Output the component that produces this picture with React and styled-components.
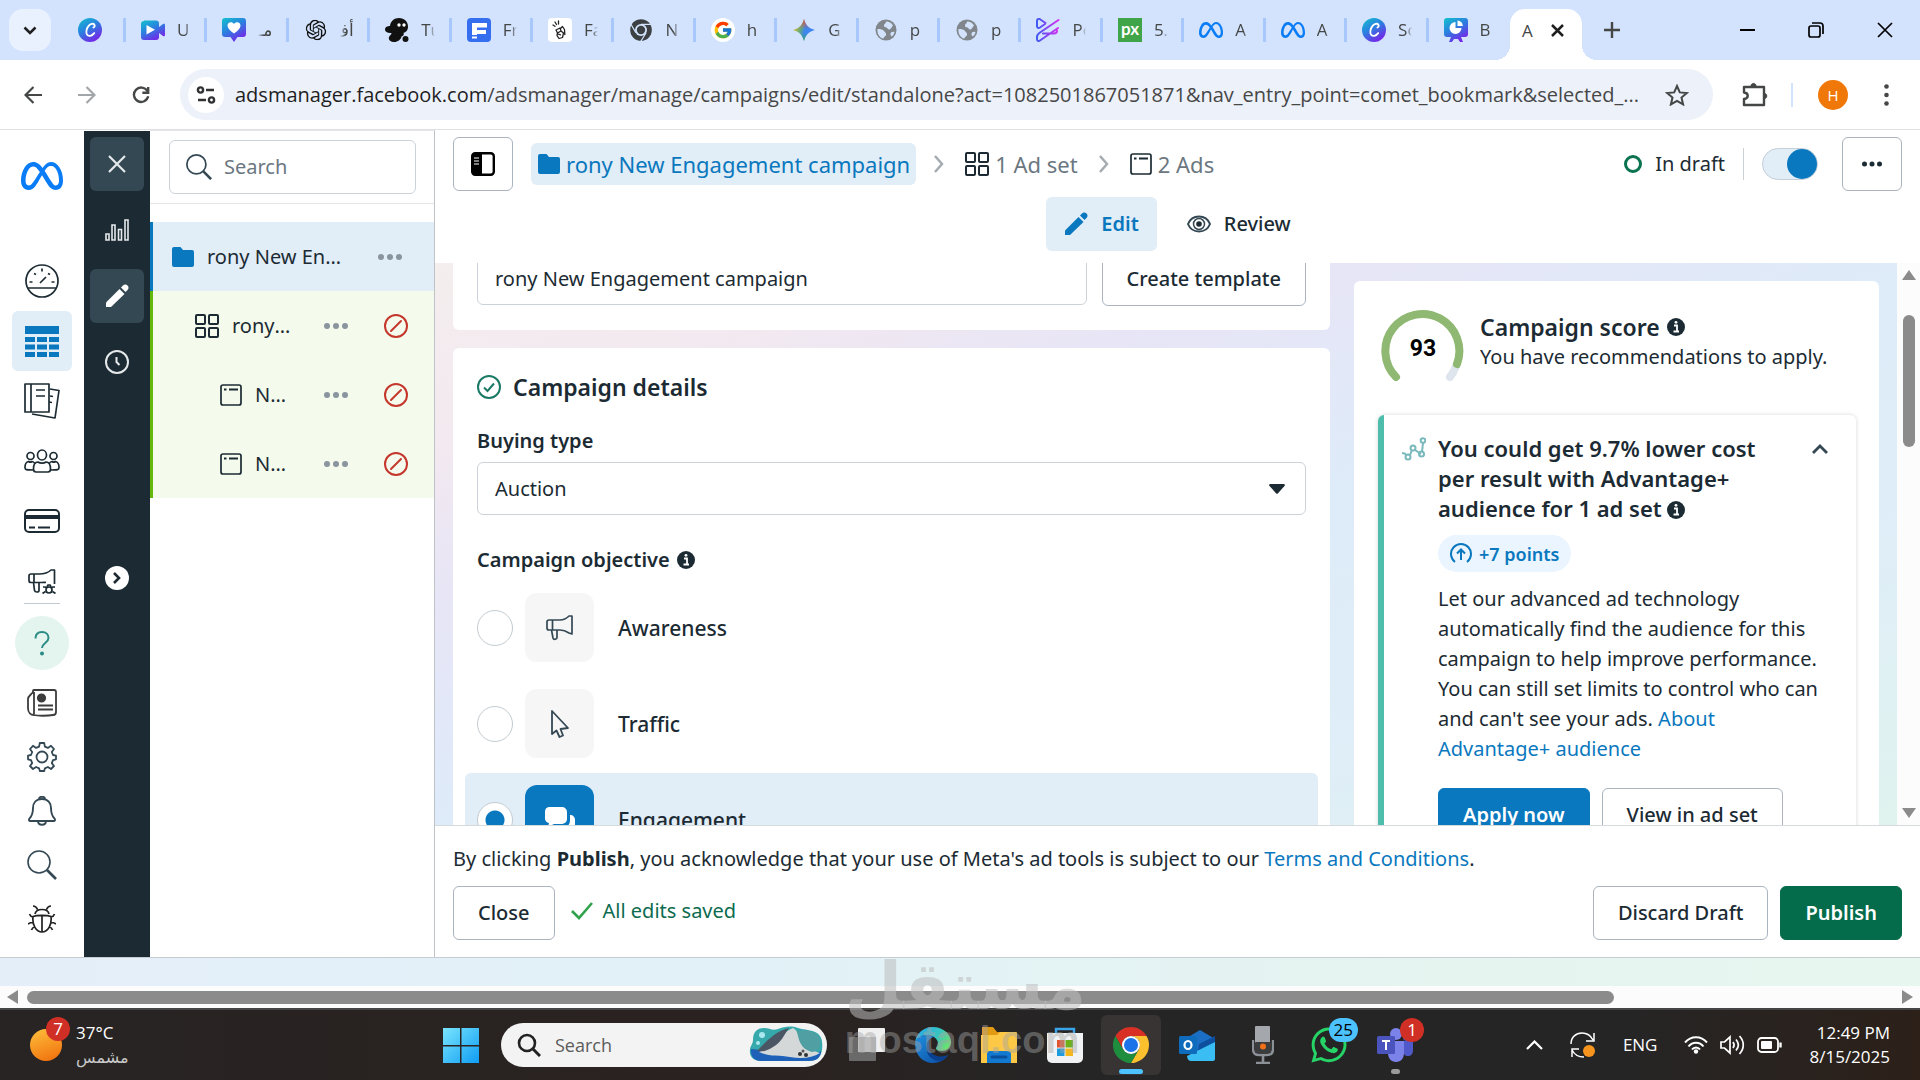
import React from 'react';
import styled, { createGlobalStyle } from 'styled-components';
import { SiMeta, SiOpenai } from 'react-icons/si';
import { FcGoogle } from 'react-icons/fc';
import { FaWhatsapp } from 'react-icons/fa';

const UI_FONT = '"Noto Sans", "Open Sans", "DejaVu Sans", sans-serif';
const SYSTEM_FONT = '"Open Sans", "Noto Sans", "DejaVu Sans", sans-serif';

/* ---------- favicons ---------- */

const CanvaFade = ({ id }) => (
  <defs>
    <linearGradient id={id} x1="0" y1="0" x2="0.6" y2="1">
      <stop offset="0" stopColor="#12c2cc" />
      <stop offset="0.5" stopColor="#2a80e0" />
      <stop offset="1" stopColor="#7428e8" />
    </linearGradient>
  </defs>
);

const CanvaIcon = ({ id }) => (
  <svg viewBox="0 0 24 24">
    <CanvaFade id={id} />
    <circle cx="12" cy="12" r="12" fill={`url(#${id})`} />
    <path
      d="M15.4 9.6c1-.6 1.600-1.800 1-2.900-1-1.700-4-1-5.800 1.200-2.200 2.600-2.900 6.500-1.600 8.700 1.400 2.200 5 1.500 7.200-1.500"
      fill="none"
      stroke="#fff"
      strokeWidth="1.800"
      strokeLinecap="round"
    />
  </svg>
);

const VideoIcon = () => (
  <svg viewBox="0 0 24 24">
    <CanvaFade id="video" />
    <path d="M3 2.500h12a3 3 0 0 1 3 3V9l4-3c1-.7 2 0 2 1v10c0 1-1 1.700-2 1l-4-3v4a3 3 0 0 1-3 3H3a3 3 0 0 1-3-3v-13a3 3 0 0 1 3-3z" fill="url(#video)" />
    <path d="M5.500 7v9.500l8.500-4.700z" fill="#fff" />
  </svg>
);

const HeartIcon = () => (
  <svg viewBox="0 0 24 24">
    <CanvaFade id="heart" />
    <path d="M3 0h18a3 3 0 0 1 3 3v13a3 3 0 0 1-3 3h-5.500L12 24l-3.500-5H3a3 3 0 0 1-3-3V3a3 3 0 0 1 3-3z" fill="url(#heart)" />
    <path d="M12 15.500C8 12.500 5.500 10.500 5.500 7.500c0-3.600 4.800-4.600 6.500-1.400 1.700-3.200 6.500-2.200 6.500 1.400 0 3-2.500 5-6.500 8z" fill="#fff" />
  </svg>
);

const OpenAiIcon = () => (
  <svg viewBox="-2 -2 28 28">
    <SiOpenai size="24" color="#111" />
  </svg>
);

const BlobIcon = () => (
  <svg viewBox="0 0 24 24">
    <path d="M14 0c5.500 0 9 4 9 8.500 0 4-2 5.500-4.500 6.500 1 2-.5 3-2 3.500-.5 3-4 5.500-7 5.500-3.500 0-6.500-2-5.500-5 .6-1.800 2.500-2 2.500-4C3 15.500 0 14 0 11.500 0 9 2.500 8 5 8 5.500 3.500 9 0 14 0z" fill="#111" />
    <circle cx="14" cy="7" r="1.700" fill="#fff" />
    <circle cx="19" cy="7" r="1.700" fill="#fff" />
    <circle cx="20.500" cy="21" r="3" fill="#111" />
  </svg>
);

const FIcon = () => (
  <svg viewBox="0 0 24 24">
    <rect width="24" height="24" rx="4" fill="#366ef0" />
    <path d="M5 5h15v4.500H10V12h9v4h-9v1H5zM5 18.500h5v2H5z" fill="#fff" />
  </svg>
);

const HandIcon = () => (
  <svg viewBox="0 0 24 24">
    <rect width="24" height="24" rx="4" fill="#fff" />
    <path
      d="M8 12l4-2 1 3-3.500 2zM9.500 15l3.500-2 2.500 2-1 4.500-3.500 1-2-3zM13 10l1.500-1.500 2 3 .3 5M7 4l1.500 2.500M10.500 3v3M5 7l2 1.300M10 16l2.500.8"
      fill="none"
      stroke="#222"
      strokeWidth="1.300"
      strokeLinecap="round"
      strokeLinejoin="round"
    />
  </svg>
);

const GreyChromeIcon = () => (
  <svg viewBox="4 4 40 40">
    <circle cx="24" cy="24" r="18" fill="#3c4043" />
    <path d="M24 14.500h18M15.500 28.500L7 14M32.500 28.500L23 44" stroke="#d3e3fd" strokeWidth="2" />
    <circle cx="24" cy="24" r="10" fill="#d3e3fd" />
    <circle cx="24" cy="24" r="7" fill="#3c4043" />
  </svg>
);

const GoogleIcon = () => (
  <svg viewBox="0 0 24 24">
    <circle cx="12" cy="12" r="12" fill="#fff" />
    <FcGoogle x="2" y="2" size="20" />
  </svg>
);

const GeminiIcon = () => (
  <svg viewBox="0 0 24 24">
    <defs>
      <linearGradient id="gemini" x1="0" y1="0.300" x2="1" y2="0.600">
        <stop offset="0" stopColor="#f7c324" />
        <stop offset="0.350" stopColor="#68a878" />
        <stop offset="0.550" stopColor="#3c86ee" />
        <stop offset="1" stopColor="#4285f4" />
      </linearGradient>
      <linearGradient id="geminiTop" x1="0" y1="0" x2="0" y2="1">
        <stop offset="0" stopColor="#ea4b40" />
        <stop offset="0.450" stopColor="#ea4b40" stopOpacity="0" />
        <stop offset="0.650" stopColor="#34a853" stopOpacity="0" />
        <stop offset="1" stopColor="#34a853" />
      </linearGradient>
    </defs>
    <path d="M12 1c1.500 6 5 9.500 11 11-6 1.500-9.500 5-11 11-1.500-6-5-9.500-11-11 6-1.500 9.500-5 11-11z" fill="url(#gemini)" />
    <path d="M12 1c1.500 6 5 9.500 11 11-6 1.500-9.500 5-11 11-1.500-6-5-9.500-11-11 6-1.500 9.500-5 11-11z" fill="url(#geminiTop)" />
  </svg>
);

const GlobeIcon = () => (
  <svg viewBox="0 0 24 24">
    <circle cx="12" cy="12" r="10.500" fill="#80868b" />
    <path d="M3.500 11c3 0 5.500.5 6.500 2s2.500 2 2 4-2.500 1.500-2.500 3.700C5.500 19.500 3 16 3.500 11zM12 3.500c3 0 5.500 1.500 7 4-1.500 1-1.500 3.500-3.500 4s-1.500-1.500-3-2-2.500 0-2.500-2S12 6 12 3.500zM17 14.500c1-.8 2.500-.8 3.500-.5-.5 2-1.500 3.500-3 4.500-1-1-1.500-3-.5-4z" fill="#d3e3fd" />
  </svg>
);

const PowerIcon = () => (
  <svg viewBox="0 0 24 24">
    <defs>
      <linearGradient id="power" x1="0" y1="0" x2="24" y2="0" gradientUnits="userSpaceOnUse">
        <stop offset="0" stopColor="#3b5bf5" />
        <stop offset="1" stopColor="#e02df0" />
      </linearGradient>
    </defs>
    <path d="M9.500 5L4 1.200C2.500.3 1 1 1 3v5c0 2 1.500 2.500 3 1.500L9 6M22.500 2L4 14.500c-1.500 1-3 2.500-3 4.500v2c0 2 1.500 2.500 3 1.500l18-12.500M7 15.500h11c2 0 3-1 3-3" fill="none" stroke="url(#power)" strokeWidth="2" strokeLinecap="round" strokeLinejoin="round" />
  </svg>
);

const PxIcon = () => (
  <svg viewBox="0 0 24 24">
    <rect width="24" height="24" fill="#3fa548" />
    <text x="12" y="16.500" textAnchor="middle" fontFamily="Lato, sans-serif" fontWeight="700" fontSize="17" fill="#fff">px</text>
  </svg>
);

const MetaIcon = () => <SiMeta color="#0a7cf5" />;

const ChartBoardIcon = () => (
  <svg viewBox="0 0 24 24">
    <CanvaFade id="board" />
    <path d="M3 0h18a3 3 0 0 1 3 3v13a3 3 0 0 1-3 3h-4l2 5h-3l-2-3h-4l-2 3H5l2-5H3a3 3 0 0 1-3-3V3a3 3 0 0 1 3-3z" fill="url(#board)" />
    <path d="M11.500 4a6 6 0 1 0 6 6h-6z" fill="#fff" />
    <path d="M13.500 2.500a5.500 5.500 0 0 1 5.300 5.500h-5.300z" fill="#fff" />
  </svg>
);

/* ---------- page icons ---------- */

const FolderIcon = () => (
  <svg width="22" height="20" viewBox="0 0 22 20">
    <path d="M2 0h6.500L11 3h9a2 2 0 0 1 2 2v13a2 2 0 0 1-2 2H2a2 2 0 0 1-2-2V2a2 2 0 0 1 2-2z" fill="#0a78be" />
  </svg>
);

const GridIcon = () => (
  <svg width="24" height="24" viewBox="0 0 24 24" fill="none" stroke="#1c2b33" strokeWidth="2">
    <rect x="1" y="1" width="9" height="9" rx="1" />
    <rect x="14" y="1" width="9" height="9" rx="1" />
    <rect x="1" y="14" width="9" height="9" rx="1" />
    <rect x="14" y="14" width="9" height="9" rx="1" />
  </svg>
);

const AdIcon = () => (
  <svg width="22" height="22" viewBox="0 0 22 22" fill="none" stroke="#1c2b33" strokeWidth="1.700">
    <rect x="1" y="1" width="20" height="20" rx="2" />
    <path d="M9 5.500h9M4 5.500h2.500" strokeWidth="2" />
  </svg>
);

const DotsIcon = ({ color = '#8a949e', size = 24 }) => (
  <svg width={size} height="8" viewBox="0 0 24 8" fill={color}>
    <circle cx="3" cy="4" r="3" />
    <circle cx="12" cy="4" r="3" />
    <circle cx="21" cy="4" r="3" />
  </svg>
);

const BanIcon = () => (
  <svg width="24" height="24" viewBox="0 0 24 24" fill="none" stroke="#c5372c" strokeWidth="2">
    <circle cx="12" cy="12" r="11" />
    <path d="M7 17L17 7" strokeLinecap="round" />
  </svg>
);

const PencilIcon = ({ color }) => (
  <svg width="24" height="24" viewBox="0 0 24 24" fill={color}>
    <path d="M1 18.500L14.500 5l5 5L6 23H1z" />
    <path d="M16 3.500l2-2a3 3 0 0 1 4.500 0 3 3 0 0 1 0 4.500l-2 2z" />
  </svg>
);

const InfoIcon = () => (
  <svg width="18" height="18" viewBox="0 0 18 18">
    <circle cx="9" cy="9" r="9" fill="#1c2b33" />
    <path d="M7 7.500h3V13M6.500 13.500h5.500" fill="none" stroke="#fff" strokeWidth="1.800" />
    <circle cx="9" cy="4.300" r="1.400" fill="#fff" />
  </svg>
);

const SearchGlass = ({ size = 26, color = '#344854', stroke = 2 }) => (
  <svg width={size} height={size} viewBox="0 0 30 30" fill="none" stroke={color} strokeWidth={stroke}>
    <circle cx="12" cy="12" r="11" />
    <path d="M20 20l9 9" strokeWidth={stroke + 1} />
  </svg>
);

const ChevronRight = () => (
  <svg width="10" height="18" viewBox="0 0 10 18" fill="none" stroke="#a4abb1" strokeWidth="2.500">
    <path d="M1 1l7 8-7 8" />
  </svg>
);

const Megaphone = () => (
  <svg width="28" height="26" viewBox="0 0 28 26" fill="none" stroke="#344854" strokeWidth="1.700" strokeLinejoin="round">
    <path d="M1 7c0-1.500 1-2 2-2h11c4 0 7-2 9-4h3v18l-3-1c-3-2-5-3-9-3H3c-1 0-2-.5-2-2zM6.500 5v10M5.500 15l1.500 8c.5 2 4 1.500 4-.5V15" />
  </svg>
);

const MegaphoneBug = () => (
  <svg width="28" height="25" viewBox="0 0 28 25" fill="none" stroke="#1c2b33" strokeWidth="1.700" strokeLinejoin="round">
    <path d="M18 13.500c-1-.2-2 0-4 0H3c-1 0-2-1-2-2V7c0-1 1-2 2-2h8c6 0 10-2 12-4h3.500v14M6 5v8M5.500 13.500l1 8c.5 2 4.500 2 4.500 0v-8" />
    <circle cx="21" cy="21" r="3" />
    <path d="M15 18h2l2 1M27 18h-2l-2 1M14.500 24.500l3-2M27.500 24.500l-3-2M19 18l1-2h2l1 2" />
  </svg>
);

const railTop = [
  {
    label: 'Account overview',
    icon: (
      <svg width="34" height="34" viewBox="0 0 34 34" fill="none" stroke="#1c2b33" strokeWidth="1.700">
        <circle cx="17" cy="17" r="16" />
        <path d="M3 24h28M15 19l6-6M4.500 18h3M26.500 18h3M9 9.500l2 1M23 9.500l2 1M17 4.500v3" />
      </svg>
    ),
  },
  {
    label: 'Campaigns',
    active: true,
    icon: (
      <svg width="34" height="31" viewBox="0 0 34 31" fill="#0a78be">
        <path d="M0 0h34v8H0zM0 11h10v5H0zM12 11h10v5H12zM24 11h10v5H24zM0 18.500h10v5H0zM12 18.500h10v5H12zM24 18.500h10v5H24zM0 26h10v5H0zM12 26h10v5H12zM24 26h10v5H24z" />
      </svg>
    ),
  },
  {
    label: 'Ads reporting',
    icon: (
      <svg width="36" height="36" viewBox="0 0 36 36" fill="none" stroke="#1c2b33" strokeWidth="1.700" strokeLinejoin="round">
        <path d="M1 1h24v28H1zM7 1v28M12 7h9M12 13h9M26 6l9 1.500L31 35 8 31M26 13l3 .5M25 19l3 .5" />
      </svg>
    ),
  },
  {
    label: 'Audiences',
    icon: (
      <svg width="36" height="24" viewBox="0 0 36 24" fill="none" stroke="#1c2b33" strokeWidth="1.700">
        <ellipse cx="18" cy="6" rx="4.500" ry="5" />
        <circle cx="6.500" cy="7" r="3.500" />
        <circle cx="29.500" cy="7" r="3.500" />
        <path d="M9.500 20c0-5 2-7 4.500-7 2 1.500 6 1.500 8 0 2.500 0 4.500 2 4.500 7 0 2-1 3-2.500 3H12c-1.500 0-2.500-1-2.500-3zM10.500 14c-1-1-2-1.500-2.500-1.500-1 .8-2.500.8-3.500 0C2 13 1 16 1 18.500 1 21 2 21 9.500 21M25.500 14c1-1 2-1.500 2.500-1.500 1 .8 2.500.8 3.500 0C34 13 35 16 35 18.500c0 2.500-1 2.500-8.500 2.500" />
      </svg>
    ),
  },
  {
    label: 'Billing',
    icon: (
      <svg width="36" height="24" viewBox="0 0 36 24" fill="none" stroke="#1c2b33" strokeWidth="2">
        <rect x="1" y="1" width="34" height="22" rx="4" />
        <path d="M1 8h34" strokeWidth="4" />
        <path d="M5 18.500h6M14 18.500h12" />
      </svg>
    ),
  },
  { label: 'Advertising settings', icon: <MegaphoneBug /> },
];

const railBottom = [
  {
    label: 'News',
    icon: (
      <svg width="30" height="28" viewBox="0 0 30 28" fill="none" stroke="#3c3c3c" strokeWidth="1.800">
        <path d="M7 1h20c1.500 0 2 1 2 2v20c0 2-1 3-3 3-5 1-16 1-19 0-3 0-6-2-6-7V10c0-3 3-4 5-7 0-1.500 0-2 1-2zM7 3v22M11 16.500h15M11 20.500h15" />
        <circle cx="14.500" cy="9" r="3.700" fill="#3c3c3c" />
      </svg>
    ),
  },
  {
    label: 'Settings',
    icon: (
      <svg width="30" height="30" viewBox="0 0 30 30" fill="none" stroke="#344854" strokeWidth="1.800" strokeLinejoin="round">
        <circle cx="15" cy="15" r="5.500" />
        <path d="M12.800 1h4.400l.7 3.600 3 1.300L24 3.800 27 7l-2.200 3 1.200 3 3 .7v3.600l-3 .8-1.200 3L27 24l-3 3-3.100-2-3 1.300-.7 2.700h-4.400l-.7-2.700-3-1.300L6 27l-3-3 2.200-2.900-1.200-3-3-.8v-3.600l3-.7 1.200-3L3 7l3-3.200 3.100 2.100 3-1.300z" />
      </svg>
    ),
  },
  {
    label: 'Notifications',
    icon: (
      <svg width="28" height="30" viewBox="0 0 28 30" fill="none" stroke="#344854" strokeWidth="1.900">
        <path d="M14 3c-6 0-9 4-9 9 0 6-1 8-3.500 10.500-1 1.500-.5 2.500 1 2.500h23c1.500 0 2-1 1-2.500C24 20 23 18 23 12c0-5-3-9-9-9zM11 3c0-3 6-3 6 0M10 25c0 5 8 5 8 0" />
      </svg>
    ),
  },
  { label: 'Search', icon: <SearchGlass size={30} stroke={1.600} /> },
  {
    label: 'Report a problem',
    icon: (
      <svg width="28" height="28" viewBox="0 0 28 28" fill="none" stroke="#222" strokeWidth="1.700">
        <path d="M7 9c1-6 13-6 14 0M5 11.500C4 20 8 27 14 27s10-7 9-15.500C19 10 9 10 5 11.500zM14 11v16M9.500 4.500C8.500 2 7 1 5 1M18.500 4.500c1-2.500 2.500-3.500 4.500-3.500M5 12c-2-.3-3-1.500-3.500-3M5 17.500c-2 0-3.500.5-5 1.500M6.500 22c-2 .5-2.500 1.500-3 3M23 12c2-.3 3-1.500 3.500-3M23 17.500c2 0 3.500.5 5 1.500M21.500 22c2 .5 2.500 1.500 3 3" />
      </svg>
    ),
  },
];

const tabs = [
  { title: 'U', icon: <VideoIcon /> },
  { title: 'مـ', icon: <HeartIcon />, rtl: true },
  { title: 'أف', icon: <OpenAiIcon />, rtl: true },
  { title: 'Tu', icon: <BlobIcon /> },
  { title: 'Fr', icon: <FIcon /> },
  { title: 'Fa', icon: <HandIcon /> },
  { title: 'N', icon: <GreyChromeIcon /> },
  { title: 'h', icon: <GoogleIcon /> },
  { title: 'G', icon: <GeminiIcon /> },
  { title: 'p', icon: <GlobeIcon /> },
  { title: 'p', icon: <GlobeIcon /> },
  { title: 'Po', icon: <PowerIcon /> },
  { title: '5.', icon: <PxIcon /> },
  { title: 'A', icon: <MetaIcon /> },
  { title: 'A', icon: <MetaIcon /> },
  { title: 'Sc', icon: <CanvaIcon id="canva2" /> },
  { title: 'B', icon: <ChartBoardIcon />, last: true },
];

/* ---------- taskbar icons ---------- */

const ChromeLogo = () => (
  <svg width="36" height="36" viewBox="4 4 40 40">
    <path d="M6.680 14A20 20 0 0 1 41.320 14H24a10 10 0 0 0-8.660 15z" fill="#d93025" />
    <path d="M41.320 14A20 20 0 0 1 24 44l8.660-15A10 10 0 0 0 24 14z" fill="#fbc02d" />
    <path d="M24 44A20 20 0 0 1 6.680 14l8.660 15a10 10 0 0 0 17.320 0z" fill="#1e8e3e" />
    <circle cx="24" cy="24" r="10" fill="#fff" />
    <circle cx="24" cy="24" r="7.800" fill="#1a73e8" />
  </svg>
);

const TaskViewIcon = () => (
  <svg width="36" height="36" viewBox="0 0 36 36">
    <rect x="0" y="10" width="27" height="24" rx="1" fill="#6a6a6a" />
    <rect x="9" y="1" width="27" height="24" rx="1" fill="#f0f0f0" />
    <path d="M9 10h18v15H9z" fill="#bdbdbd" />
  </svg>
);

const EdgeLogo = () => (
  <svg width="36" height="36" viewBox="0 0 36 36">
    <defs>
      <linearGradient id="edgeTop" x1="0" y1="0.200" x2="1" y2="0.600">
        <stop offset="0" stopColor="#2aa7ea" />
        <stop offset="0.600" stopColor="#36c6c0" />
        <stop offset="1" stopColor="#6be36a" />
      </linearGradient>
      <linearGradient id="edgeLow" x1="0" y1="0" x2="1" y2="1">
        <stop offset="0" stopColor="#1f8fe0" />
        <stop offset="1" stopColor="#0c4aa0" />
      </linearGradient>
    </defs>
    <path d="M0 16C1 6 9 0 18 0c10 0 18 7 18 15 0 6-4 9-9 9-4 0-6-1-6-2.500s2-2 2-5C23 12 18 8 12 8 6 8 2 11 0 16z" fill="url(#edgeTop)" />
    <path d="M0 17C1 11 6 8 12 8c3 0 5 1 7 2-5 1-7 5-7 9 0 7 6 11 13 11 4 0 6-1 8-2-3 5-9 8-15 8C8 36 0 28 0 17z" fill="url(#edgeLow)" />
    <path d="M14 14c-6 7-1 20 11 20 4-1 7-4 8-6-8 4-18 0-19-7z" fill="#0a3f8f" />
  </svg>
);

const ExplorerIcon = () => (
  <svg width="36" height="36" viewBox="0 0 36 36">
    <path d="M1 0h11l4 5h19v10H1z" fill="#e29a12" />
    <path d="M0 8h16l3-3h16a1 1 0 0 1 1 1v30H0z" fill="#fcc846" />
    <path d="M6 36V27c0-2 1-3 3-3h18c2 0 3 1 3 3v9z" fill="#1279d0" />
    <path d="M11 30h14" stroke="#0a4f9a" strokeWidth="3" strokeLinecap="round" />
  </svg>
);

const StoreIcon = () => (
  <svg width="36" height="36" viewBox="0 0 36 36">
    <path d="M9 7V2h18v5" fill="none" stroke="#3aa4ea" strokeWidth="2.400" />
    <path d="M0 6h36v25a5 5 0 0 1-5 5H5a5 5 0 0 1-5-5z" fill="#f1f2f3" />
    <path d="M10 13h7.500v7.500H10z" fill="#e0542e" />
    <path d="M18.500 13H26v7.500h-7.500z" fill="#6cb01c" />
    <path d="M10 21.500h7.500V29H10z" fill="#1f9be0" />
    <path d="M18.500 21.500H26V29h-7.500z" fill="#f5b81c" />
  </svg>
);

const OutlookIcon = () => (
  <svg width="36" height="31" viewBox="0 0 36 31">
    <path d="M6 9L21 0l15 9v4L18 24 6 16z" fill="#1a6fc4" />
    <path d="M20 14L36 6v9L18 28z" fill="#0d4f9e" />
    <path d="M8 26l28-14v17a2 2 0 0 1-2 2H12c-2 0-4-2-4-5z" fill="#39bdf2" />
    <rect x="0" y="6" width="18" height="18" rx="1.500" fill="#0f6cbd" />
    <ellipse cx="9" cy="15" rx="3.500" ry="4" fill="none" stroke="#fff" strokeWidth="2.200" />
  </svg>
);

const MicIcon = () => (
  <svg width="22" height="38" viewBox="0 0 22 38">
    <rect x="3" y="0" width="15" height="18" rx="1" fill="#a4a8ad" />
    <path d="M1 14v9c0 4 2 6 6 6h8c4 0 6-2 6-6v-9" fill="none" stroke="#8b9196" strokeWidth="2.400" />
    <rect x="3" y="16" width="16" height="11" rx="1" fill="#3b3c3e" />
    <circle cx="11" cy="20.500" r="3" fill="#f07018" />
    <path d="M11 30v6M4 37h14" stroke="#8b9196" strokeWidth="2.600" />
  </svg>
);

const TeamsIcon = () => (
  <svg width="36" height="34" viewBox="0 0 36 34">
    <circle cx="19" cy="6" r="6" fill="#7b83eb" />
    <circle cx="30" cy="9" r="4" fill="#5059c9" />
    <path d="M24 13h12v9c0 4-2 6-5 6s-5-2-5-6z" fill="#5059c9" />
    <path d="M11 13h16v12c0 5-3 9-8 9s-8-4-8-9z" fill="#7b83eb" />
    <rect x="0" y="8" width="18" height="18" rx="1.500" fill="#4b53bc" />
    <path d="M5 13h8M9 13v9" stroke="#fff" strokeWidth="2" />
  </svg>
);

// stingray in a wave, the daily picture of the search box
const StingrayArt = () => (
  <svg width="74" height="38" viewBox="0 0 74 38">
    <path d="M4 14c0-8 4-12 11-12 6 0 8 3 14 1s12-4 20-1c8 2 12 2 17 4 7 3 8 10 7 18-1 7-6 11-13 11H12c-8 0-12-5-11-11 0-4 3-6 3-10z" fill="#35a9ac" />
    <path d="M2 23c6 0 10 2 16 3 14 3 28 2 40 3 6 0 10-2 14-4 0 7-5 10-12 10H12C5 35 1 30 2 23z" fill="#1d62b8" />
    <path d="M10 26C22 22 30 8 44 2c6 3 5 11 10 16 5 5 11 7 17 9-8 5-18 6-30 4-11-2-21 0-31-5z" fill="#d5d8d9" />
    <path d="M8 25C16 17 26 5 40 2c-5 7-8 15-16 19-6 4-11 5-16 4z" fill="#4a5663" />
    <path d="M48 5c9-2 20 0 23 8 2 7-1 12-8 13-8-2-13-7-15-21z" fill="#4f9fa3" />
    <circle cx="13" cy="9" r="3" fill="#a9e8ee" />
    <circle cx="9" cy="17" r="2" fill="#a9e8ee" />
    <circle cx="51" cy="28" r="2" fill="#333" />
    <circle cx="57" cy="29" r="2" fill="#333" />
    <circle cx="54" cy="25" r="1.500" fill="#555" />
  </svg>
);

function TabStrip() {
  return (
    <Strip>
      <TabSearch aria-label="Search tabs">
        <svg width="14" height="9" viewBox="0 0 14 9" fill="none" stroke="#1f1f1f" strokeWidth="2.500">
          <path d="M1.500 1.500L7 7l5.500-5.500" />
        </svg>
      </TabSearch>
      <PinnedTab aria-label="Canva">
        <Favicon><CanvaIcon id="canva1" /></Favicon>
      </PinnedTab>
      <TabList>
        {tabs.map((tab, i) => (
          <Tab key={i} $last={tab.last}>
            <Favicon>{tab.icon}</Favicon>
            <TabTitle dir={tab.rtl ? 'rtl' : 'ltr'}>{tab.title}</TabTitle>
          </Tab>
        ))}
      </TabList>
      <ActiveTab>
        A
        <svg width="13" height="13" viewBox="0 0 13 13" stroke="#1f1f1f" strokeWidth="2.500">
          <path d="M1 1l11 11M12 1L1 12" />
        </svg>
      </ActiveTab>
      <PlainButton aria-label="New tab">
        <svg width="16" height="16" viewBox="0 0 16 16" stroke="#444746" strokeWidth="2.400">
          <path d="M8 0v16M0 8h16" />
        </svg>
      </PlainButton>
      <WindowControls>
        <PlainButton aria-label="Minimize">
          <svg width="15" height="15" viewBox="0 0 15 15" stroke="#000" strokeWidth="2"><path d="M0 7h15" /></svg>
        </PlainButton>
        <PlainButton aria-label="Restore">
          <svg width="16" height="16" viewBox="0 0 16 16" fill="none" stroke="#000" strokeWidth="1.700">
            <rect x="1" y="4" width="11" height="11" rx="2" />
            <path d="M4 1h8a3 3 0 0 1 3 3v8" />
          </svg>
        </PlainButton>
        <PlainButton aria-label="Close window">
          <svg width="16" height="16" viewBox="0 0 16 16" stroke="#000" strokeWidth="1.700"><path d="M1 1l14 14M15 1L1 15" /></svg>
        </PlainButton>
      </WindowControls>
    </Strip>
  );
}

function Toolbar() {
  return (
    <BrowserBar>
      <PlainButton aria-label="Back">
        <svg width="18" height="18" viewBox="0 0 18 18" fill="none" stroke="#444746" strokeWidth="2.200"><path d="M18 9H2M9.500 1L1.500 9l8 8" /></svg>
      </PlainButton>
      <PlainButton aria-label="Forward">
        <svg width="18" height="18" viewBox="0 0 18 18" fill="none" stroke="#a3a6a8" strokeWidth="2.200"><path d="M0 9h16M8.500 1l8 8-8 8" /></svg>
      </PlainButton>
      <PlainButton aria-label="Reload">
        <svg width="18" height="18" viewBox="0 0 20 20" fill="none" stroke="#444746" strokeWidth="2.600">
          <path d="M17 5.500A8 8 0 1 0 18 11.500M18 1v6.500h-6.500" />
        </svg>
      </PlainButton>
      <AddressBar>
        <SiteInfo aria-label="Site information">
          <svg width="20" height="18" viewBox="0 0 20 18" fill="none" stroke="#303234" strokeWidth="2.400">
            <circle cx="4.500" cy="4" r="2.600" />
            <path d="M10 4h8M2 14h8" />
            <circle cx="15.500" cy="14" r="2.600" />
          </svg>
        </SiteInfo>
        <Url>
          <b>adsmanager.facebook.com</b>
          /adsmanager/manage/campaigns/edit/standalone?act=1082501867051871&amp;nav_entry_point=comet_bookmark&amp;selected_...
        </Url>
        <PlainButton aria-label="Bookmark this tab">
          <svg width="24" height="22" viewBox="0 0 24 22" fill="none" stroke="#444746" strokeWidth="2">
            <path d="M12 2l2.800 6.400 7 .6-5.300 4.600 1.600 6.800L12 16.800l-6.100 3.600 1.600-6.800L2.200 9l7-.6z" />
          </svg>
        </PlainButton>
      </AddressBar>
      <PlainButton aria-label="Extensions">
        <svg width="26" height="26" viewBox="0 0 26 26" fill="none" stroke="#444746" strokeWidth="2.400" strokeLinejoin="round">
          <path d="M2 5h20v18H2v-6c5-.5 5-6 0-6.500z" />
          <path d="M9 4c0-3.500 5-3.500 5 0zM22.500 11.500c3 0 3 5 0 5z" fill="#444746" strokeWidth="1" />
        </svg>
      </PlainButton>
      <BarDivider />
      <Avatar aria-label="Profile">H</Avatar>
      <PlainButton aria-label="Menu">
        <svg width="5" height="22" viewBox="0 0 5 22" fill="#444746">
          <circle cx="2.500" cy="2.500" r="2.300" />
          <circle cx="2.500" cy="11" r="2.300" />
          <circle cx="2.500" cy="19.500" r="2.300" />
        </svg>
      </PlainButton>
    </BrowserBar>
  );
}

function Rail() {
  return (
    <RailNav>
      <RailLogo href="#">
        <SiMeta size="42" color="#0a7cf5" title="Meta" />
      </RailLogo>
      {railTop.map((item) => (
        <RailButton key={item.label} aria-label={item.label} $active={item.active}>
          {item.icon}
        </RailButton>
      ))}
      <RailLine />
      <HelpButton aria-label="Help">
        <svg width="16" height="25" viewBox="0 0 16 25" fill="none" stroke="#2a8c85" strokeWidth="2">
          <path d="M1.500 7.500C1.500 3.500 4 1 8 1s6.500 2.500 6.500 6c0 5-6.500 5-6.500 10" />
          <circle cx="8" cy="22.500" r="1" fill="#2a8c85" />
        </svg>
      </HelpButton>
      {railBottom.map((item) => (
        <SmallRailButton key={item.label} aria-label={item.label}>
          {item.icon}
        </SmallRailButton>
      ))}
    </RailNav>
  );
}

function EditorRail() {
  return (
    <DarkRail>
      <DarkButton aria-label="Close editor" $active>
        <svg width="18" height="18" viewBox="0 0 18 18" stroke="#e6e9eb" strokeWidth="2.200"><path d="M1 1l16 16M17 1L1 17" /></svg>
      </DarkButton>
      <DarkButton aria-label="Charts">
        <svg width="24" height="22" viewBox="0 0 24 22" fill="none" stroke="#e6e9eb" strokeWidth="1.600">
          <path d="M1 15h3v6H1zM7 6h3v15H7zM13.500 10.500h3V21h-3zM20 1h3v20h-3z" />
        </svg>
      </DarkButton>
      <DarkButton aria-label="Edit" $active><PencilIcon color="#fff" /></DarkButton>
      <DarkButton aria-label="History">
        <svg width="24" height="24" viewBox="0 0 24 24" fill="none" stroke="#e6e9eb" strokeWidth="2">
          <circle cx="12" cy="12" r="11" />
          <path d="M11.500 7v5l3 3" />
        </svg>
      </DarkButton>
      <ExpandButton aria-label="Expand">
        <svg width="8" height="12" viewBox="0 0 8 12" fill="none" stroke="#1c2b33" strokeWidth="2.600"><path d="M1 1l5 5-5 5" /></svg>
      </ExpandButton>
    </DarkRail>
  );
}

function CampaignTree() {
  return (
    <Tree>
      <TreeSearch>
        <SearchField>
          <label htmlFor="tree-search" aria-label="Search"><SearchGlass /></label>
          <input id="tree-search" placeholder="Search" />
        </SearchField>
      </TreeSearch>
      <TreeRow $level={0}>
        <FolderIcon />
        <span>rony New Engagement campaign</span>
        <PlainButton aria-label="More"><DotsIcon /></PlainButton>
      </TreeRow>
      <TreeRow $level={1}>
        <GridIcon />
        <span>rony New ad set</span>
        <PlainButton aria-label="More"><DotsIcon /></PlainButton>
        <BanIcon />
      </TreeRow>
      <TreeRow $level={2}>
        <AdIcon />
        <span>New ad</span>
        <PlainButton aria-label="More"><DotsIcon /></PlainButton>
        <BanIcon />
      </TreeRow>
      <TreeRow $level={2}>
        <AdIcon />
        <span>New ad</span>
        <PlainButton aria-label="More"><DotsIcon /></PlainButton>
        <BanIcon />
      </TreeRow>
    </Tree>
  );
}

function EditorHeader() {
  return (
    <Header>
      <CrumbRow>
        <OutlineButton $icon aria-label="Toggle panel">
          <svg width="24" height="24" viewBox="0 0 24 24">
            <rect x="1.200" y="1.200" width="21.600" height="21.600" rx="3" fill="#fff" stroke="#000" strokeWidth="2.400" />
            <path d="M2 2h9v20H2z" />
            <path d="M3 6h5M3 9h5M3 12h5" stroke="#fff" strokeWidth="1.200" />
          </svg>
        </OutlineButton>
        <CurrentCrumb href="#"><FolderIcon />rony New Engagement campaign</CurrentCrumb>
        <ChevronRight />
        <Crumb href="#"><GridIcon />1 Ad set</Crumb>
        <ChevronRight />
        <Crumb href="#"><AdIcon />2 Ads</Crumb>
        <Status><i />In draft</Status>
        <Switch type="checkbox" role="switch" aria-label="Campaign on or off" defaultChecked />
        <OutlineButton $icon aria-label="More options"><DotsIcon color="#1c2b33" size={20} /></OutlineButton>
      </CrumbRow>
      <ModeRow>
        <ModeButton $active><PencilIcon color="#0a78be" />Edit</ModeButton>
        <ModeButton>
          <svg width="24" height="18" viewBox="0 0 24 18" fill="none" stroke="#344854" strokeWidth="2">
            <path d="M1 9c4-10 18-10 22 0-4 10-18 10-22 0z" />
            <circle cx="12" cy="9" r="5.500" strokeWidth="1.500" />
            <circle cx="12" cy="9" r="2.800" fill="#1c2b33" stroke="none" />
          </svg>
          Review
        </ModeButton>
      </ModeRow>
    </Header>
  );
}

function CampaignForm() {
  return (
    <FormColumn>
      <Card>
        <NameRow>
          <TextField aria-label="Campaign name" defaultValue="rony New Engagement campaign" />
          <OutlineButton>Create template</OutlineButton>
        </NameRow>
      </Card>
      <Card>
        <CardTitle>
          <svg width="24" height="24" viewBox="0 0 24 24" fill="none" stroke="#1a7a66" strokeWidth="2">
            <circle cx="12" cy="12" r="11" />
            <path d="M7 12.500l3.500 3.500L17 8.500" />
          </svg>
          Campaign details
        </CardTitle>
        <FieldLabel htmlFor="buying-type">Buying type</FieldLabel>
        <SelectBox>
          <select id="buying-type" defaultValue="Auction">
            <option>Auction</option>
            <option>Reservation</option>
          </select>
          <svg width="16" height="10" viewBox="0 0 16 10" fill="#1c2b33">
            <path d="M1.500 0h13c1.200 0 1.800 1.200 1 2L9 9.300c-.6.700-1.400.7-2 0L.5 2C-.3 1.200.3 0 1.500 0z" />
          </svg>
        </SelectBox>
        <FieldSet>
          <legend>Campaign objective <InfoIcon /></legend>
          <Objective>
            <input type="radio" name="objective" />
            <Tile><Megaphone /></Tile>
            Awareness
          </Objective>
          <Objective>
            <input type="radio" name="objective" />
            <Tile>
              <svg width="22" height="28" viewBox="0 0 22 28" fill="none" stroke="#344854" strokeWidth="1.800" strokeLinejoin="round">
                <path d="M3 1v23l4.500-3.500 3 6.500 3.500-1.500-2.500-6.500 7.500-1z" />
              </svg>
            </Tile>
            Traffic
          </Objective>
          <Objective $active>
            <input type="radio" name="objective" defaultChecked />
            <Tile $active>
              <svg width="32" height="28" viewBox="0 0 32 28" fill="#fff">
                <path d="M5 1h13a5 5 0 0 1 5 5v7a5 5 0 0 1-5 5h-8l-6 3 1-4a5 5 0 0 1-4-4V6a5 5 0 0 1 4-5z" />
                <path d="M26 9c3 0 5 2 5 5v6c0 2-1 3-2 4l1 4-5-3h-9c-2 0-4-1-4-4h8c4 0 6-3 6-7z" />
              </svg>
            </Tile>
            Engagement
          </Objective>
        </FieldSet>
      </Card>
    </FormColumn>
  );
}

function ScorePanel() {
  return (
    <ScoreCard>
      <ScoreHead>
        <svg width="84" height="76" viewBox="0 0 84 76" fill="none" strokeWidth="8" strokeLinecap="round">
          <path d="M69 69A37 37 0 0 0 75 58" stroke="#dfe5ed" />
          <path d="M15 69A37 37 0 1 1 76 56" stroke="#8fb872" />
          <text x="42" y="48" textAnchor="middle" fontFamily="Roboto, sans-serif" fontSize="23" fontWeight="700" fill="#000">93</text>
        </svg>
        <div>
          <h2>Campaign score <InfoIcon /></h2>
          <p>You have recommendations to apply.</p>
        </div>
      </ScoreHead>
      <Tip>
        <svg width="24" height="24" viewBox="0 0 24 24" fill="none" stroke="#79b9bd" strokeWidth="2">
          <path d="M0 16l4 1M8 18l2-5M13 13l6 4M20 15l1-9" />
          <circle cx="6" cy="20" r="2.500" />
          <circle cx="11" cy="11" r="2.500" />
          <circle cx="19.500" cy="17" r="2.500" />
          <circle cx="21" cy="3.500" r="2.300" />
        </svg>
        <TipBody>
          <h3>You could get 9.7% lower cost per result with Advantage+ audience for 1 ad set <InfoIcon /></h3>
          <Points>
            <svg width="22" height="22" viewBox="0 0 22 22" fill="none" stroke="#0a78be" strokeWidth="2">
              <path d="M5 19a10 10 0 1 1 12 0M11 17V7M7 10.500l4-4 4 4" />
            </svg>
            +7 points
          </Points>
          <p>
            Let our advanced ad technology automatically find the audience for this campaign to help improve
            performance. You can still set limits to control who can and can't see your ads.{' '}
            <Link href="#">About Advantage+ audience</Link>
          </p>
          <TipActions>
            <SolidButton $color="#0a78be">Apply now</SolidButton>
            <OutlineButton>View in ad set</OutlineButton>
          </TipActions>
        </TipBody>
        <PlainButton aria-label="Collapse">
          <svg width="16" height="10" viewBox="0 0 16 10" fill="none" stroke="#344854" strokeWidth="2.800"><path d="M1 9l7-7 7 7" /></svg>
        </PlainButton>
      </Tip>
    </ScoreCard>
  );
}

function EditorFooter() {
  return (
    <Footer>
      <p>
        By clicking <b>Publish</b>, you acknowledge that your use of Meta's ad tools is subject to our{' '}
        <Link href="#">Terms and Conditions</Link>.
      </p>
      <FooterRow>
        <OutlineButton>Close</OutlineButton>
        <Saved>
          <svg width="22" height="18" viewBox="0 0 22 18" fill="none" stroke="#31a24c" strokeWidth="2.600"><path d="M1 9l7 7L21 1" /></svg>
          All edits saved
        </Saved>
        <OutlineButton>Discard Draft</OutlineButton>
        <SolidButton $color="#046b4b">Publish</SolidButton>
      </FooterRow>
    </Footer>
  );
}

function Taskbar() {
  return (
    <Bar>
      <Weather>
        <WeatherIcon><Badge $color="#cf2f24">7</Badge></WeatherIcon>
        <div>
          37°C
          <small dir="rtl">مشمس</small>
        </div>
      </Weather>
      <Apps>
        <AppButton aria-label="Start">
          <svg width="36" height="36" viewBox="0 0 36 36">
            <defs>
              <linearGradient id="win" x1="0" y1="0" x2="36" y2="36" gradientUnits="userSpaceOnUse">
                <stop offset="0" stopColor="#7be6fd" />
                <stop offset="1" stopColor="#0f9cf3" />
              </linearGradient>
            </defs>
            <path d="M0 1h17v17H0zM18.500 1H36v17H18.500zM0 19.500h17V36H0zM18.500 19.500H36V36H18.500z" fill="url(#win)" />
          </svg>
        </AppButton>
        <TaskSearch>
          <label htmlFor="task-search" aria-label="Search Windows">
            <svg width="24" height="24" viewBox="0 0 24 24" fill="none" stroke="#222" strokeWidth="2.600">
              <circle cx="10" cy="10" r="8" />
              <path d="M15.500 15.500L23 23" strokeWidth="3" />
            </svg>
          </label>
          <input id="task-search" placeholder="Search" />
          <StingrayArt />
        </TaskSearch>
        <AppButton aria-label="Task view"><TaskViewIcon /></AppButton>
        <AppButton aria-label="Edge"><EdgeLogo /></AppButton>
        <AppButton aria-label="File Explorer"><ExplorerIcon /></AppButton>
        <AppButton aria-label="Store"><StoreIcon /></AppButton>
        <AppButton aria-label="Chrome" $running><ChromeLogo /></AppButton>
        <AppButton aria-label="Outlook"><OutlookIcon /></AppButton>
        <AppButton aria-label="Recorder"><MicIcon /></AppButton>
        <AppButton aria-label="WhatsApp">
          <FaWhatsapp size="40" color="#25d366" />
          <Badge $color="#4cc2ff" $ink="#000">25</Badge>
        </AppButton>
        <AppButton aria-label="Teams" $idle>
          <TeamsIcon />
          <Badge $color="#cf2f24">1</Badge>
        </AppButton>
      </Apps>
      <Tray>
        <svg width="17" height="10" viewBox="0 0 17 10" fill="none" stroke="#fff" strokeWidth="2.200"><path d="M1 9l7.500-7.500L16 9" /></svg>
        <svg width="26" height="26" viewBox="0 0 26 26" fill="none" stroke="#fff" strokeWidth="1.500">
          <path d="M1 12C1 5 6 1 12 1c5 0 9 3 11 7M24 1v8h-8M14 25C8 25 4 22 2 18M2 25v-8h7" />
          <circle cx="19" cy="19" r="6" fill="#f7941d" stroke="none" />
        </svg>
        <span>ENG</span>
        <TrayGroup>
          <svg width="24" height="18" viewBox="0 0 24 18" fill="none" stroke="#fff" strokeWidth="2">
            <path d="M1 6.500C7-.5 17-.5 23 6.500M4.500 10.500C8.500 5.500 15.500 5.500 19.500 10.500M8 13.500c2-2.800 6-2.800 8 0" />
            <circle cx="12" cy="15.500" r="2.200" fill="#fff" stroke="none" />
          </svg>
          <svg width="25" height="20" viewBox="0 0 25 20" fill="none" stroke="#fff" strokeWidth="1.700">
            <path d="M1 7h3.500L10 2v16l-5.500-5H1zM13 7c1.500 2 1.500 4 0 6M16 4.500c3 3.500 3 7.500 0 11M19.500 1c5 5.500 5 12.500 0 18" />
          </svg>
          <svg width="25" height="16" viewBox="0 0 25 16" fill="none" stroke="#fff" strokeWidth="1.800">
            <rect x="1" y="1" width="20" height="14" rx="3.500" />
            <rect x="4" y="4" width="11" height="8" rx="1" fill="#fff" stroke="none" />
            <path d="M23.500 5.500v5" strokeWidth="2.400" />
          </svg>
        </TrayGroup>
        <Clock>12:49 PM<br />8/15/2025</Clock>
      </Tray>
    </Bar>
  );
}

export default function App() {
  return (
    <Screen>
      <GlobalStyle />
      <TabStrip />
      <Toolbar />
      <Workspace>
        <Rail />
        <EditorRail />
        <CampaignTree />
        <Editor>
          <EditorHeader />
          <ScrollArea>
            <CampaignForm />
            <ScorePanel />
            <VerticalScroll>
              <svg width="14" height="10" viewBox="0 0 14 10"><path d="M7 0l7 10H0z" /></svg>
              <span />
              <svg width="14" height="10" viewBox="0 0 14 10"><path d="M0 0h14L7 10z" /></svg>
            </VerticalScroll>
          </ScrollArea>
          <EditorFooter />
        </Editor>
      </Workspace>
      <BottomStrip />
      <HorizontalScroll>
        <svg width="11" height="14" viewBox="0 0 11 14"><path d="M11 0v14L0 7z" /></svg>
        <span />
        <svg width="11" height="14" viewBox="0 0 11 14"><path d="M0 0l11 7-11 7z" /></svg>
      </HorizontalScroll>
      <Taskbar />
      <Watermark>
        <span lang="ar">مستقل</span>
        mostaql.com
      </Watermark>
    </Screen>
  );
}

const GlobalStyle = createGlobalStyle`
  *, *::before, *::after {
    box-sizing: border-box;
  }
  body {
    margin: 0;
    overflow: hidden;
  }
  button, input, select {
    font: inherit;
    color: inherit;
  }
  h1, h2, h3, p {
    margin: 0;
  }
  svg {
    display: block;
    flex-shrink: 0;
  }
`;

const Screen = styled.div`
  position: relative;
  display: flex;
  flex-direction: column;
  height: 100vh;
  font-family: ${UI_FONT};
  font-size: 20px;
  line-height: 30px;
  color: #1c2b33;
  background: #fff;
`;

const PlainButton = styled.button`
  display: flex;
  align-items: center;
  justify-content: center;
  padding: 0;
  border: none;
  background: none;
`;

const Strip = styled.div`
  display: flex;
  align-items: center;
  height: 60px;
  padding: 0 27px 0 9px;
  background: #d3e3fd;
  font-family: ${SYSTEM_FONT};
  font-size: 17px;
  color: #444746;
`;

const TabSearch = styled(PlainButton)`
  width: 42px;
  height: 42px;
  border-radius: 14px;
  background: #e9f1fe;
`;

const TabList = styled.div`
  display: flex;
  flex: 0 1 1384px;
  min-width: 0;
`;

const Favicon = styled.span`
  display: flex;
  align-items: center;
  justify-content: center;
  width: 24px;
  height: 24px;
  flex-shrink: 0;
  > svg {
    width: 24px;
    height: 24px;
  }
`;

const Tab = styled.button`
  display: flex;
  align-items: center;
  gap: 12px;
  flex: 1 1 0;
  min-width: 0;
  height: 24px;
  padding: 0 0 0 15px;
  border: none;
  border-right: 3px solid ${(p) => (p.$last ? 'transparent' : '#a8c7fa')};
  background: none;
`;

const PinnedTab = styled(Tab)`
  flex: 0 0 75px;
  padding-left: 27px;
`;

const TabTitle = styled.span`
  width: 14px;
  overflow: hidden;
  white-space: nowrap;
  text-align: left;
  mask-image: linear-gradient(to right, #000 60%, transparent);
  &[dir='rtl'] {
    text-align: right;
    mask-image: linear-gradient(to left, #000 60%, transparent);
  }
`;

const ActiveTab = styled.button`
  position: relative;
  display: flex;
  align-items: center;
  align-self: flex-end;
  justify-content: space-between;
  width: 72px;
  height: 51px;
  padding: 0 18px 8px 12px;
  margin-right: 22px;
  border: none;
  border-radius: 15px 15px 0 0;
  background: #fff;
  &::before,
  &::after {
    content: '';
    position: absolute;
    bottom: 0;
    width: 15px;
    height: 15px;
  }
  &::before {
    right: 100%;
    background: radial-gradient(circle at 0 0, transparent 15px, #fff 15px);
  }
  &::after {
    left: 100%;
    background: radial-gradient(circle at 100% 0, transparent 15px, #fff 15px);
  }
`;

const WindowControls = styled.div`
  display: flex;
  gap: 53px;
  margin-left: auto;
`;

const BrowserBar = styled.div`
  display: flex;
  align-items: center;
  height: 70px;
  padding: 0 31px 0 24px;
  border-bottom: 1px solid #dfe1e5;
  font-family: ${SYSTEM_FONT};
  > button {
    margin-right: 36px;
  }
  > button:nth-of-type(3) {
    margin-right: 30px;
  }
  > button:nth-of-type(4) {
    margin: 0 23px 0 29px;
  }
  > button:last-of-type {
    margin-right: 0;
  }
`;

const AddressBar = styled.div`
  display: flex;
  align-items: center;
  flex: 1;
  min-width: 0;
  height: 51px;
  padding: 0 24px 0 8px;
  border-radius: 26px;
  background: #ecf1fa;
`;

const SiteInfo = styled(PlainButton)`
  width: 36px;
  height: 36px;
  border-radius: 50%;
  background: #fff;
`;

const Url = styled.div`
  flex: 1;
  min-width: 0;
  padding-left: 11px;
  overflow: hidden;
  white-space: nowrap;
  font-size: 20px;
  color: #474747;
  b {
    font-weight: 400;
    color: #1f1f1f;
  }
`;

const BarDivider = styled.span`
  width: 2px;
  height: 24px;
  margin-right: 25px;
  background: #d3e3fd;
`;

const Avatar = styled(PlainButton)`
  width: 30px;
  height: 30px;
  border-radius: 50%;
  background: #f07808;
  color: #fff;
  font-size: 15px;
`;

const Workspace = styled.div`
  display: flex;
  flex: 1;
  min-height: 0;
  border-bottom: 1px solid #c5cdd1;
`;

const RailNav = styled.nav`
  display: flex;
  flex-direction: column;
  align-items: center;
  width: 84px;
  flex-shrink: 0;
`;

const RailLogo = styled.a`
  display: flex;
  align-items: center;
  height: 92px;
  margin-bottom: 29px;
`;

const RailButton = styled(PlainButton)`
  width: 60px;
  height: 60px;
  border-radius: 6px;
  background: ${(p) => (p.$active ? '#e1edf7' : 'none')};
`;

const RailLine = styled.span`
  width: 36px;
  height: 1px;
  margin: -8px 0 12px;
  background: #c4c8d0;
`;

const SmallRailButton = styled(PlainButton)`
  width: 54px;
  height: 54px;
`;

const HelpButton = styled(SmallRailButton)`
  margin-bottom: 6px;
  border-radius: 50%;
  background: #e4f4ef;
`;

const DarkRail = styled.nav`
  display: flex;
  flex-direction: column;
  align-items: center;
  gap: 12px;
  width: 66px;
  flex-shrink: 0;
  padding-top: 6px;
  margin-top: 1px;
  background: #1c2b33;
`;

const DarkButton = styled(PlainButton)`
  width: 54px;
  height: 54px;
  border-radius: 6px;
  background: ${(p) => (p.$active ? '#344854' : 'none')};
`;

const ExpandButton = styled(PlainButton)`
  width: 24px;
  height: 24px;
  margin-top: 165px;
  border-radius: 50%;
  background: #fff;
`;

const Tree = styled.aside`
  width: 285px;
  flex-shrink: 0;
  border-top: 1px solid #e4e6e8;
  border-right: 1px solid #bdc3c7;
`;

const TreeSearch = styled.div`
  margin-bottom: 18px;
  padding: 9px 18px 9px 19px;
  border-bottom: 1px solid #e4e6e8;
`;

const SearchField = styled.div`
  display: flex;
  align-items: center;
  gap: 12px;
  height: 54px;
  padding: 0 16px;
  border: 1px solid #cbd2d9;
  border-radius: 6px;
  input {
    width: 100%;
    min-width: 0;
    padding: 0;
    border: none;
    outline: none;
  }
  input::placeholder {
    color: #6b7780;
  }
`;

const TreeRow = styled.div`
  display: flex;
  align-items: center;
  height: 69px;
  padding: 0 26px 0 ${(p) => [19, 42, 67][p.$level]}px;
  border-left: 3px solid ${(p) => (p.$level ? '#64b80c' : '#0a78be')};
  background: ${(p) => (p.$level ? '#f4faec' : '#e1edf7')};
  > span {
    flex: 1;
    min-width: 0;
    margin: 0 30px 0 13px;
    overflow: hidden;
    white-space: nowrap;
    text-overflow: ellipsis;
  }
  > button {
    margin-right: ${(p) => (p.$level ? 36 : 6)}px;
  }
`;

const Editor = styled.main`
  display: flex;
  flex-direction: column;
  flex: 1;
  min-width: 0;
`;

const Header = styled.header`
  padding: 7px 18px 12px;
`;

const CrumbRow = styled.div`
  display: flex;
  align-items: center;
  gap: 18px;
`;

const OutlineButton = styled.button`
  display: flex;
  align-items: center;
  justify-content: center;
  height: 54px;
  width: ${(p) => (p.$icon ? '60px' : 'auto')};
  padding: ${(p) => (p.$icon ? '0' : '0 24px')};
  border: 1px solid #a9b4be;
  border-radius: 6px;
  background: #fff;
  font-weight: 500;
  white-space: nowrap;
`;

const SolidButton = styled(OutlineButton)`
  border-color: ${(p) => p.$color};
  background: ${(p) => p.$color};
  color: #fff;
  font-weight: 600;
`;

const Crumb = styled.a`
  display: flex;
  align-items: center;
  gap: 6px;
  height: 42px;
  padding: 0 3px;
  font-size: 22px;
  color: #6b7780;
  text-decoration: none;
  white-space: nowrap;
`;

const CurrentCrumb = styled(Crumb)`
  padding: 0 6px 0 7px;
  border-radius: 6px;
  background: #e1edf7;
  color: #0a78be;
`;

const Status = styled.span`
  display: flex;
  align-items: center;
  gap: 13px;
  height: 32px;
  margin-left: auto;
  padding-right: 18px;
  border-right: 1px solid #ccd1d5;
  i {
    width: 18px;
    height: 18px;
    border: 3px solid #0b7350;
    border-radius: 50%;
  }
`;

const Switch = styled.input`
  appearance: none;
  display: flex;
  justify-content: flex-end;
  width: 56px;
  height: 32px;
  margin: 0 6px 0 0;
  border: 1px solid #c5cfd8;
  border-radius: 16px;
  background: #e1edf7;
  &::after {
    content: '';
    width: 30px;
    height: 30px;
    border-radius: 50%;
    background: #0a78be;
  }
`;

const ModeRow = styled.div`
  display: flex;
  justify-content: center;
  gap: 12px;
  margin-top: 6px;
`;

const ModeButton = styled(PlainButton)`
  gap: 13px;
  height: 54px;
  padding: 0 18px;
  border-radius: 6px;
  background: ${(p) => (p.$active ? '#e1edf7' : 'none')};
  color: ${(p) => (p.$active ? '#0a78be' : '#1c2b33')};
  font-weight: ${(p) => (p.$active ? 600 : 500)};
`;

const ScrollArea = styled.div`
  display: flex;
  align-items: flex-start;
  flex: 1;
  min-height: 0;
  gap: 24px;
  padding-left: 18px;
  overflow: hidden;
  background: linear-gradient(to bottom right, #f4eeee, #f3e9f0 16%, #e7e5f6 30%, #deebf9 50%, #dfeef7 75%, #e0f3ee);
`;

const FormColumn = styled.div`
  display: flex;
  flex-direction: column;
  gap: 18px;
  flex: 1;
  min-width: 0;
  margin-top: -35px;
`;

const Card = styled.section`
  padding: 24px;
  border-radius: 6px;
  background: #fff;
`;

const NameRow = styled.div`
  display: flex;
  gap: 15px;
`;

const TextField = styled.input`
  flex: 1;
  min-width: 0;
  height: 53px;
  padding: 0 17px;
  border: 1px solid #cbd2d9;
  border-radius: 6px;
`;

const CardTitle = styled.h2`
  display: flex;
  align-items: center;
  gap: 12px;
  margin-bottom: 24px;
  font-size: 23px;
  font-weight: 600;
`;

const FieldLabel = styled.label`
  display: block;
  margin-bottom: 6px;
  font-weight: 600;
`;

const SelectBox = styled.div`
  display: grid;
  align-items: center;
  select,
  svg {
    grid-area: 1 / 1;
  }
  select {
    appearance: none;
    width: 100%;
    height: 53px;
    padding: 0 17px;
    border: 1px solid #cbd2d9;
    border-radius: 6px;
    background: #fff;
  }
  svg {
    justify-self: end;
    margin-right: 21px;
    pointer-events: none;
  }
`;

const FieldSet = styled.fieldset`
  margin: 30px -12px 0;
  padding: 0;
  border: none;
  legend {
    display: flex;
    align-items: center;
    gap: 7px;
    padding: 0 12px;
    margin-bottom: 6px;
    font-weight: 600;
  }
`;

const Objective = styled.label`
  display: flex;
  align-items: center;
  gap: 12px;
  height: 93px;
  margin-bottom: 3px;
  padding: 0 12px;
  border-radius: 6px;
  background: ${(p) => (p.$active ? '#e1edf7' : 'none')};
  font-size: 21px;
  font-weight: 500;
  input {
    appearance: none;
    width: 36px;
    height: 36px;
    margin: 0;
    border: 1px solid #c2cbd0;
    border-radius: 50%;
    background: #fff;
  }
  input:checked {
    background: radial-gradient(circle, #0a78be 9px, #fff 10px);
  }
`;

const Tile = styled.span`
  display: flex;
  align-items: center;
  justify-content: center;
  width: 69px;
  height: 69px;
  margin-right: 12px;
  border-radius: 12px;
  background: ${(p) => (p.$active ? '#0a78be' : '#f6f6f6')};
`;

const ScoreCard = styled.section`
  width: 525px;
  flex-shrink: 0;
  margin-top: 18px;
  padding: 27px 23px 24px 24px;
  border-radius: 6px;
  background: #fff;
`;

const ScoreHead = styled.div`
  display: flex;
  gap: 15px;
  padding-left: 3px;
  margin-bottom: 31px;
  h2 {
    display: flex;
    align-items: center;
    gap: 7px;
    margin-top: 4px;
    font-size: 23px;
    font-weight: 600;
  }
  p {
    white-space: nowrap;
  }
`;

const Tip = styled.article`
  display: flex;
  align-items: flex-start;
  gap: 12px;
  padding: 18px 28px 24px 18px;
  border-left: 6px solid #4fbdab;
  border-radius: 6px;
  box-shadow: 0 0 4px rgba(0, 0, 0, 0.16);
  > svg {
    margin-top: 4px;
  }
  > button {
    margin-top: 11px;
  }
`;

const TipBody = styled.div`
  flex: 1;
  h3 {
    max-width: 330px;
    font-size: 22px;
    font-weight: 600;
  }
  h3 svg {
    display: inline-block;
    vertical-align: -2px;
  }
  p {
    margin-right: -28px;
  }
`;

const Points = styled.span`
  display: inline-flex;
  align-items: center;
  gap: 7px;
  height: 37px;
  margin: 12px 0;
  padding: 0 12px;
  border-radius: 19px;
  background: #ebf5ff;
  color: #0a78be;
  font-size: 18px;
  font-weight: 600;
`;

const Link = styled.a`
  color: #0a78be;
  text-decoration: none;
`;

const TipActions = styled.div`
  display: flex;
  gap: 12px;
  margin-top: 24px;
`;

const VerticalScroll = styled.div`
  display: flex;
  flex-direction: column;
  align-items: center;
  align-self: stretch;
  width: 23px;
  flex-shrink: 0;
  margin-left: -6px;
  padding: 7px 0;
  background: #fcfcfc;
  svg {
    fill: #8b8b8b;
  }
  span {
    width: 12px;
    height: 132px;
    margin: 35px 0 auto;
    border-radius: 6px;
    background: #8b8b8b;
  }
`;

const Footer = styled.footer`
  padding: 18px 18px 17px;
  border-top: 1px solid #d5dadd;
  background: #fff;
`;

const FooterRow = styled.div`
  display: flex;
  align-items: center;
  gap: 12px;
  margin-top: 12px;
`;

const Saved = styled.span`
  display: flex;
  align-items: center;
  gap: 10px;
  margin: 0 auto 0 4px;
  padding-bottom: 4px;
  color: #0b6b4f;
`;

const BottomStrip = styled.div`
  height: 28px;
  background: linear-gradient(to right, #e4eef9, #e2f1f8 35%, #e5f4ef 75%, #e7f6ef);
`;

const HorizontalScroll = styled.div`
  display: flex;
  align-items: center;
  height: 22px;
  padding: 0 7px;
  background: #fcfcfc;
  svg {
    fill: #8b8b8b;
  }
  span {
    flex: 0 1 1587px;
    height: 13px;
    margin: 0 auto 0 9px;
    border-radius: 7px;
    background: #8b8b8b;
  }
`;

const Bar = styled.footer`
  display: grid;
  grid-template-columns: 1fr auto 1fr;
  align-items: center;
  height: 72px;
  padding: 0 30px;
  border-top: 2px solid #454545;
  background: linear-gradient(to right, #272423, #2a2220 40%, #262525 55%, #262525 85%, #2c2019);
  font-family: ${SYSTEM_FONT};
  font-size: 17px;
  line-height: 24px;
  color: #fff;
`;

const Weather = styled.div`
  display: flex;
  align-items: center;
  gap: 14px;
  small {
    display: block;
    font-size: 16px;
    color: #c8c8c8;
  }
`;

const WeatherIcon = styled.span`
  position: relative;
  width: 32px;
  height: 32px;
  border-radius: 50%;
  background: linear-gradient(160deg, #ffc03c, #ef6c0a);
`;

const Badge = styled.span`
  position: absolute;
  top: -12px;
  right: -8px;
  min-width: 24px;
  height: 24px;
  padding: 0 5px;
  border-radius: 12px;
  background: ${(p) => p.$color};
  color: ${(p) => p.$ink || '#fff'};
  font-size: 17px;
  line-height: 24px;
  text-align: center;
`;

const Apps = styled.div`
  display: flex;
  align-items: center;
  gap: 6px;
  margin-right: 64px;
`;

const AppButton = styled(PlainButton)`
  position: relative;
  width: 60px;
  height: 60px;
  border-radius: 6px;
  background: ${(p) => (p.$running ? '#373433' : 'none')};
  &::after {
    content: '';
    position: absolute;
    bottom: 1px;
    width: ${(p) => (p.$running ? 24 : 9)}px;
    height: 5px;
    border-radius: 3px;
    background: ${(p) => (p.$running ? '#4cc2ff' : p.$idle ? '#9b9b9b' : 'none')};
  }
  ${Badge} {
    top: 3px;
    right: 1px;
  }
`;

const TaskSearch = styled.div`
  display: flex;
  align-items: center;
  gap: 14px;
  width: 326px;
  height: 44px;
  margin: 0 4px;
  padding: 0 4px 0 16px;
  border-radius: 22px;
  background: #f3f3f3;
  color: #5c5c5c;
  font-size: 18px;
  input {
    flex: 1;
    min-width: 0;
    padding: 0;
    border: none;
    background: none;
    outline: none;
  }
  input::placeholder {
    color: #5c5c5c;
  }
`;

const Tray = styled.div`
  display: flex;
  align-items: center;
  justify-content: flex-end;
  gap: 27px;
`;

const TrayGroup = styled.span`
  display: flex;
  align-items: center;
  gap: 12px;
`;

const Clock = styled.time`
  text-align: right;
`;

const Watermark = styled.div`
  position: absolute;
  left: 44%;
  bottom: 18px;
  display: flex;
  flex-direction: column;
  align-items: flex-start;
  pointer-events: none;
  font-family: 'Liberation Sans', sans-serif;
  font-size: 38px;
  line-height: 44px;
  font-weight: 700;
  color: rgba(165, 165, 165, 0.45);
  span {
    font-family: 'DejaVu Sans', sans-serif;
    font-size: 66px;
    line-height: 62px;
    color: rgba(190, 190, 190, 0.55);
  }
`;
